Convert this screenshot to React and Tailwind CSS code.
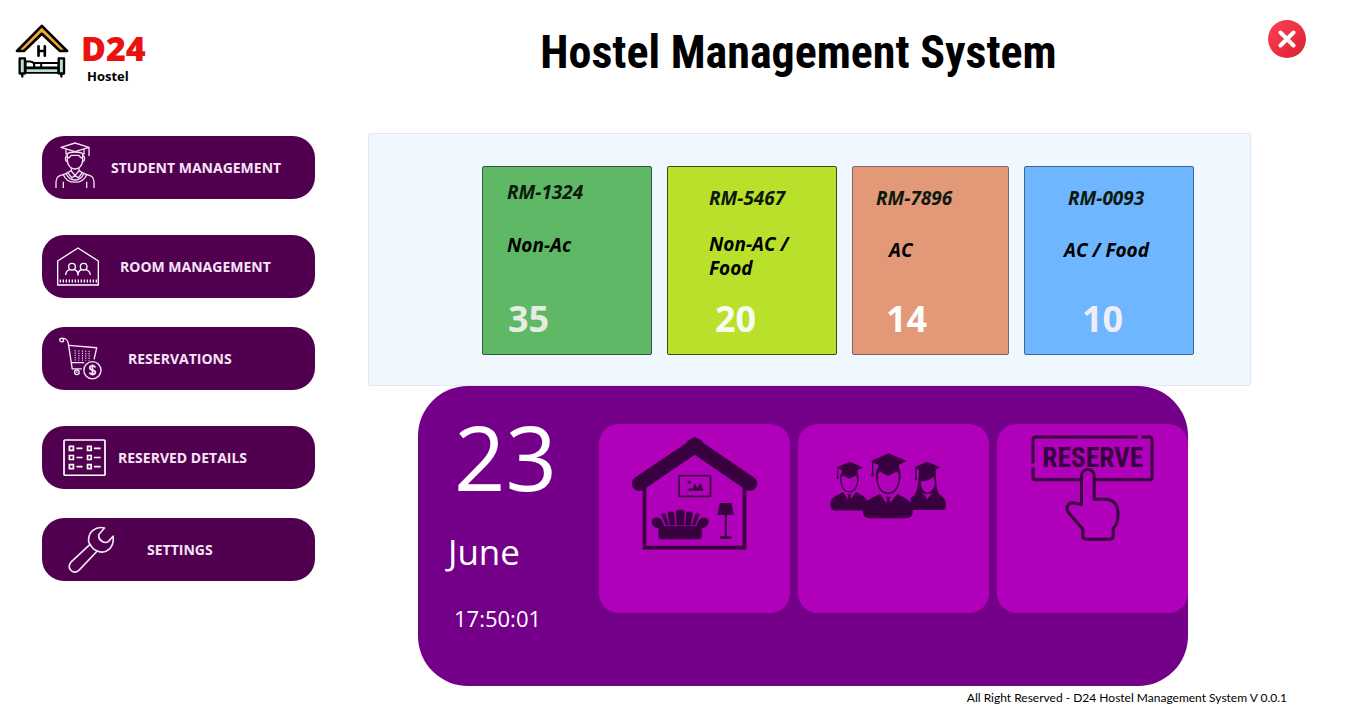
function LogoIcon() {
  return (
    <svg viewBox="46 43 163 166" className="h-14 w-[54px]" fill="none" stroke="#000" strokeLinejoin="round" strokeLinecap="round" aria-hidden="true">
      <path d="M52 123 L127 47 L203 123 H182 L127 71 L73 123 Z" fill="#f5a93a" strokeWidth="8" />
      <path d="M117 109 V137 M136 109 V137 M117 123 H136" strokeWidth="8" />
      <path d="M78 155 H92 Q100 155 104 162 V173 H78 Z" fill="#fff" strokeWidth="6" />
      <path d="M104 159 H178 V173 H104 Z M125 160 V173" fill="#fff" strokeWidth="6" />
      <path d="M78 175 H177 V189 H78 Z" fill="#b5e3cd" strokeWidth="6" />
      <path d="M60 145 H76 V191 H60 Z M178 145 H194 V191 H178 Z" fill="#b5e3cd" strokeWidth="7" />
      <path d="M68 194 V200 M186 194 V200" strokeWidth="7" />
    </svg>
  );
}

function StudentIcon() {
  return (
    <svg viewBox="75 50 120 153" className="h-[51px] w-10" fill="none" stroke="#f6e0f6" strokeWidth="4" strokeLinejoin="round" aria-hidden="true">
      <path d="M93 66 L135 53 L177 66 L135 79 Z M177 67 V92" />
      <path d="M108 72 V86 C122 78 148 78 162 86 V72" />
      <path d="M112 86 V104 C112 121 123 131 135 131 C147 131 158 121 158 104 V86" />
      <path d="M113 98 C122 98 120 90 125 90 H145 C150 90 148 98 157 98" />
      <path d="M111 92 C104 92 105 110 114 109 M159 92 C166 92 165 110 156 109" />
      <path d="M124 128 V137 L135 150 L147 137 V128 M135 150 L126 158 L113 142 L124 136 M135 150 L145 158 L157 142 L147 136" />
      <path d="M113 142 C104 146 104 146 100 148 C112 178 158 178 170 148 L157 142" />
      <path d="M109 146 C120 170 150 170 161 146" />
      <path d="M78 188 V170 C78 154 88 150 102 147 M192 188 V170 C192 154 182 150 168 147 M100 188 V169 M170 188 V169" />
    </svg>
  );
}

function RoomIcon() {
  return (
    <svg viewBox="82 368 126 117" className="h-[39px] w-[42px]" fill="none" stroke="#fff" strokeWidth="4" strokeLinejoin="round" aria-hidden="true">
      <path d="M84 482 V410 L145 371 L206 410 V482 Z" />
      <path d="M90 470 H202" strokeWidth="9" strokeDasharray="4 5" />
      <circle cx="127" cy="427" r="10" />
      <circle cx="162" cy="427" r="10" />
      <path d="M108 452 C109 441 115 437 120 436 M134 436 C141 438 145 444 145 452 C145 444 149 438 156 436 M169 436 C175 438 181 442 182 452" />
    </svg>
  );
}

function CartIcon() {
  return (
    <svg viewBox="87 71 130 129" className="size-[43px]" fill="none" stroke="#fbeafb" strokeWidth="4" strokeLinejoin="round" aria-hidden="true">
      <path d="M101 83 C96 87 89 85 89 79 C89 72 101 73 101 83 M95 74 C108 73 115 82 116 95 L127 167 H156" />
      <path d="M117 96 L201 103 L193 138 M125 148 H163" />
      <path d="M136 110 V142 M147 111 V142 M158 111 V142 M168 112 V142 M178 112 V142" strokeWidth="3" strokeDasharray="4 3" />
      <circle cx="141" cy="177" r="7" />
      <path d="M141 172 V180" strokeWidth="3" />
      <circle cx="188" cy="171" r="26" />
      <path d="M197 163 C195 156 180 156 180 164 C180 173 197 168 197 177 C197 185 181 185 179 178 M188 154 V187" strokeWidth="5" />
    </svg>
  );
}

function DetailsIcon() {
  return (
    <svg viewBox="98 374 128 110" className="h-[37px] w-[43px]" fill="none" stroke="#fff" strokeWidth="5" aria-hidden="true">
      <rect x="101" y="377" width="122" height="105" rx="3" />
      <path d="M117 396 H129 V408 H117 Z M117 423 H129 V435 H117 Z M117 450 H129 V462 H117 Z M171 396 H182 V408 H171 Z M171 423 H182 V435 H171 Z M171 450 H182 V462 H171 Z" />
      <path d="M138 402 H156 M138 429 H156 M138 456 H156 M190 402 H210 M190 429 H210 M190 456 H210" />
    </svg>
  );
}

function WrenchIcon() {
  return (
    <svg viewBox="113 633 141 143" className="size-[47px]" fill="none" stroke="#f8e6f8" strokeWidth="5" strokeLinejoin="round" aria-hidden="true">
      <path d="M223 639 C196 632 172 652 175 680 C176 684 177 686 179 689 L121 743 C107 760 126 783 145 768 L201 709 C229 721 254 697 249 664 L236 679 C224 690 202 676 206 659 Z" />
      <path d="M179 688 C184 698 191 706 201 709" />
    </svg>
  );
}

function LoungeIcon() {
  return (
    <svg viewBox="95 66 380 339" className="h-[113px] w-[127px]" fill="none" stroke="#38003f" aria-hidden="true">
      <path d="M119 206 L286 93 L451 206" strokeWidth="44" strokeLinecap="round" strokeLinejoin="round" />
      <path d="M262 79 L286 66 L310 79 Z" fill="#38003f" strokeWidth="1" />
      <path d="M135 212 V398 H435 V212" strokeWidth="11" />
      <rect x="239" y="182" width="94" height="62" strokeWidth="5" />
      <g fill="#38003f" stroke="none">
        <path d="M262 227 L272 218 L280 221 L286 205 L293 220 L303 203 L312 227 Z" />
        <circle cx="269" cy="202" r="5" />
        <path d="M361 264 H396 L403 300 H354 Z M376 300 H382 V364 H396 V371 H361 V364 H376 Z" />
      </g>
      <g fill="#38003f" stroke="#b000b9" strokeWidth="2">
        <path d="M183 299 Q188 290 198 295 L210 332 H198 C194 322 192 312 183 299 Z" />
        <path d="M302 299 Q297 290 287 295 L275 332 H289 C292 322 294 312 302 299 Z" />
        <path d="M203 294 Q212 284 225 290 L229 334 H210 Z" />
        <path d="M281 294 Q273 284 260 290 L255 334 H275 Z" />
        <path d="M228 288 Q242 277 257 288 L255 334 H230 Z" />
        <path d="M176 341 C150 336 150 306 172 307 C189 308 190 324 195 332 H290 C294 324 296 308 313 307 C334 307 334 336 308 341 V366 Q307 374 300 374 H184 Q177 374 176 366 Z" />
      </g>
    </svg>
  );
}

function GraduateBust({ transform }) {
  return (
    <g transform={transform}>
      <path d="M187 275 C184 242 208 236 238 220 L262 256 L290 220 C318 236 339 242 336 275 C336 290 325 294 310 294 H213 C198 294 187 290 187 275 Z" fill="#38003f" />
      <path d="M241 222 L262 254 L286 222 L274 213 H250 Z" fill="#b000b9" />
      <path d="M254 229 H271 L267 236 L271 262 L262 274 L255 262 L259 236 Z" fill="#38003f" />
      <path d="M226 178 C224 150 228 130 264 130 C300 130 302 150 299 178 Z" fill="#38003f" />
      <path d="M229 160 C233 158 236 150 236 150 L262 164 L290 150 C290 150 293 158 296 162 C298 196 284 219 262 219 C240 219 227 196 229 160 Z" fill="#b000b9" stroke="#38003f" strokeWidth="5" />
      <path d="M211 122 L264 99 L318 122 L295 133 V150 L264 164 L233 150 V133 L218 127 V152 L220 168 H211 L214 152 V126 Z" fill="#38003f" />
    </g>
  );
}

function GraduatesIcon() {
  return (
    <svg viewBox="88 98 384 198" className="h-[66px] w-32" aria-hidden="true">
      <GraduateBust transform="translate(-51 50) scale(.75)" />
      <path d="M355 160 C351 192 352 208 340 226 L330 232 V269 H424 C434 269 437 262 436 252 C434 234 424 228 416 222 C405 205 409 190 405 160 Z" fill="#38003f" />
      <path d="M360 184 C374 184 392 178 398 168 C400 174 402 182 403 186 C401 206 392 216 381 216 C369 216 360 202 360 184 Z" fill="#b000b9" />
      <path d="M360 218 L373 226 L380 238 L387 226 L400 218 L389 221 H371 Z" fill="#b000b9" />
      <path d="M341 141 L380 124 L419 141 L405 148 V168 H355 V150 L348 146 V166 L349 180 H342 L344 166 V144 Z" fill="#38003f" />
      <GraduateBust />
    </svg>
  );
}

function ReserveIcon() {
  return (
    <svg viewBox="125 45 368 320" className="h-[107px] w-[123px]" fill="none" stroke="#38003f" strokeWidth="9" strokeLinejoin="round" aria-hidden="true">
      <path d="M131 130 V58 Q131 51 138 51 H444 M456 51 H480 Q487 51 487 58 V171 Q487 179 480 179 H316 M275 179 H138 Q131 179 131 171 V142" />
      <text x="310" y="140" textAnchor="middle" fontSize="82" fill="#38003f" stroke="none" className="font-['Roboto_Condensed','Roboto',sans-serif] font-bold">RESERVE</text>
      <path d="M276 253 V167 A19 19 0 0 1 314 167 V237 H345 C374 237 385 255 385 278 C385 302 383 312 371 324 V346 Q371 357 360 357 H291 Q280 357 280 346 V326 L238 278 C226 260 238 244 256 249 Z" fill="#b000b9" />
    </svg>
  );
}

const navGroups = [
  [{ label: "STUDENT MANAGEMENT", Icon: StudentIcon, layout: "gap-4 pl-[13px]" }],
  [
    { label: "ROOM MANAGEMENT", Icon: RoomIcon, layout: "gap-[21px] pl-[15px]" },
    { label: "RESERVATIONS", Icon: CartIcon, layout: "gap-[26px] pl-[17px]" },
  ],
  [
    { label: "RESERVED DETAILS", Icon: DetailsIcon, layout: "gap-3 pl-[21px]" },
    { label: "SETTINGS", Icon: WrenchIcon, layout: "gap-8 pl-[26px]" },
  ],
];

const rooms = [
  { code: "RM-1324", type: "Non-Ac", count: 35, card: "bg-[#5fb865] border-[#2f5c38] pt-[13px]", text: "pl-6", typeText: "pl-6 mt-[29px]", number: "pl-[25px] text-[#e6ece0]" },
  { code: "RM-5467", type: "Non-AC / Food", count: 20, card: "bg-[#b9e02a] border-[#3f4c10] pt-[19px]", text: "pl-[41px]", typeText: "pl-[41px] pr-8 mt-[22px]", number: "pl-[47px] text-[#f8fcf0]" },
  { code: "RM-7896", type: "AC", count: 14, card: "bg-[#e39878] border-[#7a6a66] pt-[19px]", text: "pl-[23px]", typeText: "pl-9 mt-7", number: "pl-[33px] text-white" },
  { code: "RM-0093", type: "AC / Food", count: 10, card: "bg-[#6eb6ff] border-[#3f6690] pt-[19px]", text: "pl-[43px]", typeText: "pl-[39px] mt-7", number: "pl-[57px] text-[#f0eef4]" },
];

const shortcuts = [
  { label: "Rooms", Icon: LoungeIcon, pad: "pt-[13px]" },
  { label: "Students", Icon: GraduatesIcon, pad: "pt-[29px]" },
  { label: "Reserve", Icon: ReserveIcon, pad: "pt-[11px]" },
];

export default function App() {
  return (
    <div className="min-h-screen bg-white font-['Open_Sans',sans-serif] text-black">
      <header className="flex h-[133px] items-start pr-10 pt-5">
        <div className="flex w-[329px] shrink-0 gap-3 pl-[15px] pt-1">
          <LogoIcon />
          <div className="pt-1">
            <p className="text-[34px] font-black leading-10 text-[#ec1111]">D24</p>
            <p className="pl-1.5 text-[13px] font-bold leading-4">Hostel</p>
          </div>
        </div>
        <h1 className="flex-1 whitespace-nowrap text-center font-['Roboto_Condensed','Roboto',sans-serif] text-[46px] font-bold leading-[64px]">
          Hostel Management System
        </h1>
        <button type="button" aria-label="Close" className="flex size-[38px] shrink-0 items-center justify-center rounded-full bg-linear-to-br from-[#fa4254] to-[#dd1c30]">
          <svg viewBox="0 0 18 18" className="size-[18px]" stroke="#fff" strokeWidth="4" strokeLinecap="round" aria-hidden="true">
            <path d="M2.5 2.5 L15.5 15.5 M15.5 2.5 L2.5 15.5" />
          </svg>
        </button>
      </header>

      <div className="flex">
        <nav className="flex w-[368px] shrink-0 flex-col gap-9 pl-[42px] pr-[53px] pt-[3px]">
          {navGroups.map((group) => (
            <div key={group[0].label} className="flex flex-col gap-[29px]">
              {group.map(({ label, Icon, layout }) => (
                <button key={label} type="button" className={`flex h-[63px] w-full items-center rounded-[22px] bg-[#50004f] text-left text-sm font-bold text-[#f8e4f8] ${layout}`}>
                  <Icon />
                  <span className="whitespace-nowrap">{label}</span>
                </button>
              ))}
            </div>
          ))}
        </nav>

        <main className="mr-[95px] flex-1">
          <section className="grid h-[253px] grid-cols-[170fr_170fr_157fr_170fr] gap-[15px] rounded-xs border border-[#dfe9f3] bg-[#f0f7fe] pb-[30px] pl-[113px] pr-14 pt-8">
            {rooms.map((room) => (
              <article key={room.code} className={`flex flex-col rounded-xs border pb-2 ${room.card}`}>
                <h2 className={`text-[19px] font-bold italic leading-6 text-[#0d1a0d] ${room.text}`}>{room.code}</h2>
                <p className={`text-[19px] font-bold italic leading-6 ${room.typeText}`}>{room.type}</p>
                <p className={`mt-auto text-4xl font-bold leading-[54px] ${room.number}`}>{room.count}</p>
              </article>
            ))}
          </section>

          <section className="ml-[50px] mr-[63px] flex h-[300px] rounded-[50px] bg-[#74008a] text-white">
            <div className="w-[181px] shrink-0 pl-[30px] pt-[18px]">
              <p className="pl-1.5 text-[90px] leading-[104px]">23</p>
              <p className="mt-[18px] text-[35px] leading-[52px]">June</p>
              <p className="mt-6 pl-1.5 text-[22px] leading-8">17:50:01</p>
            </div>
            <div className="grid flex-1 grid-cols-3 gap-2 pt-[38px]">
              {shortcuts.map(({ label, Icon, pad }) => (
                <button key={label} type="button" aria-label={label} className={`flex h-[189px] items-start justify-center rounded-[20px] bg-[#b000b9] ${pad}`}>
                  <Icon />
                </button>
              ))}
            </div>
          </section>
        </main>
      </div>

      <footer className="pr-[59px] pt-1 text-right font-[Lato,sans-serif] text-xs leading-4">
        All Right Reserved - D24 Hostel Management System V 0.0.1
      </footer>
    </div>
  );
}
